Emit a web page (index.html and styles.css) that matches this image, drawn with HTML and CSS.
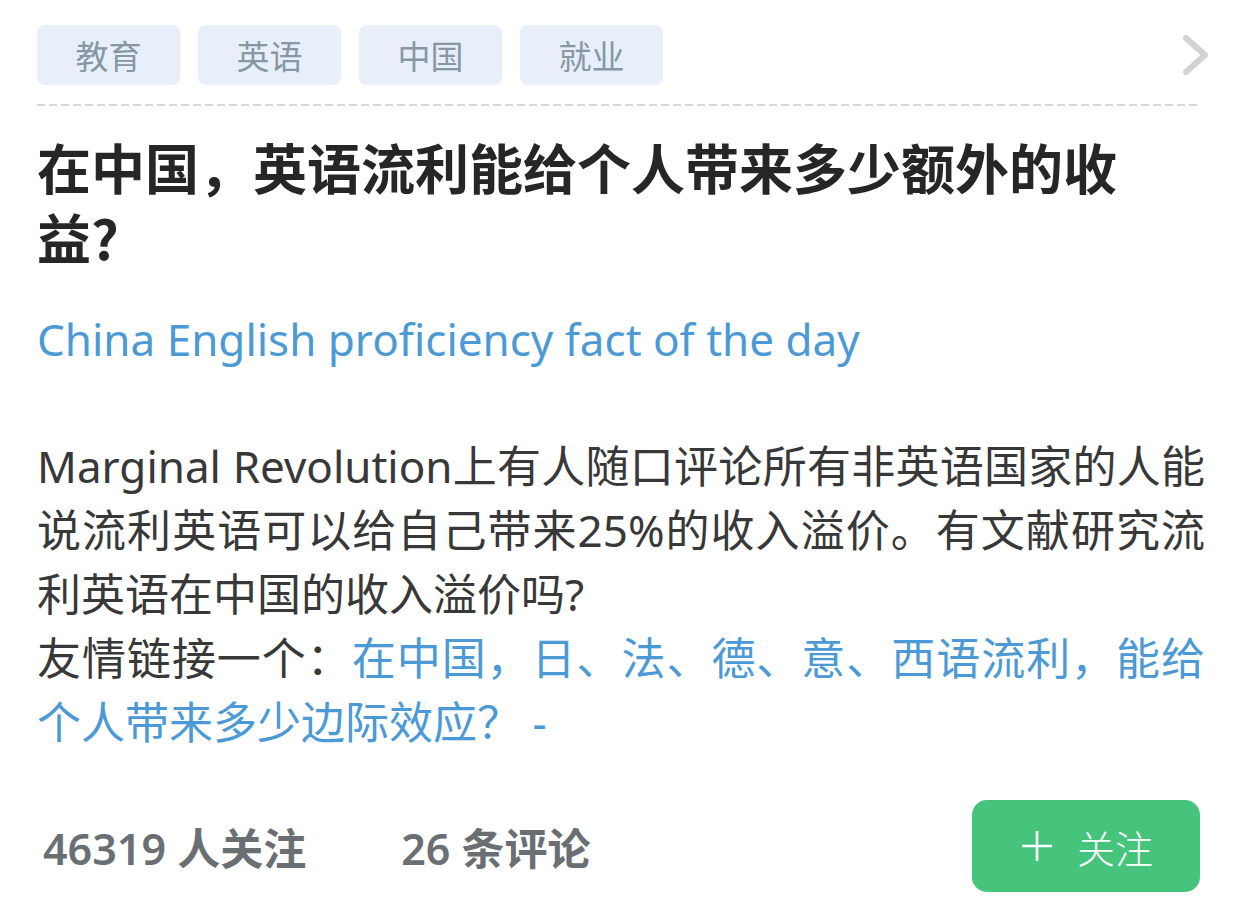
FILE: index.html
```html
<!DOCTYPE html>
<html lang="zh-CN">
<head>
<meta charset="utf-8">
<title>问题</title>
<link rel="stylesheet" href="styles.css">
</head>
<body>
<div class="card">
  <div class="tags-row">
    <div class="tags">
      <span class="tag">教育</span>
      <span class="tag">英语</span>
      <span class="tag">中国</span>
      <span class="tag">就业</span>
    </div>
    <svg class="chevron" width="30" height="42" viewBox="0 0 30 42">
      <polyline points="5,4 24,21 5,38" fill="none" stroke="#d3d3d3" stroke-width="6" stroke-linecap="round" stroke-linejoin="round"/>
    </svg>
  </div>
  <div class="dash"></div>

  <h1 class="title">在中国，英语流利能给个人带来多少额外的收益?</h1>

  <p class="source"><a class="link">China English proficiency fact of the day</a></p>

  <div class="body">
    <p class="para">Marginal Revolution上有人随口评论所有非英语国家的人能说流利英语可以给自己带来25%的收入溢价。有文献研究流利英语在中国的收入溢价吗?</p>
    <p class="para">友情链接一个：<a class="link">在中国，日、法、德、意、西语流利，能给个人带来多少边际效应？ -</a></p>
  </div>

  <div class="footer">
    <div class="stats">
      <span class="stat">46319 人关注</span>
      <span class="stat">26 条评论</span>
    </div>
    <button class="follow">
      <svg class="plus" width="32" height="32" viewBox="0 0 32 32">
        <path d="M16 1V31M1 16H31" stroke="#fff" stroke-width="2.6" fill="none"/>
      </svg>
      <span>关注</span>
    </button>
  </div>
</div>
</body>
</html>
```

FILE: styles.css
```css
* { box-sizing: border-box; }

html, body {
  margin: 0;
  padding: 0;
  background: #ffffff;
}

body {
  font-family: "Noto Sans", "Noto Sans CJK SC", sans-serif;
  color: #333333;
}

.card {
  width: 1242px;
  padding: 25px 37px 0 37px;
}

.tags-row {
  display: flex;
  align-items: center;
  justify-content: space-between;
  height: 60px;
}

.tags {
  display: flex;
  gap: 18px;
}

.tag {
  display: flex;
  align-items: center;
  justify-content: center;
  width: 143px;
  height: 60px;
  border-radius: 8px;
  background: #e8effa;
  color: #8797a6;
  font-family: "Noto Sans CJK SC", sans-serif;
  font-size: 33px;
  font-weight: 400;
}

.chevron {
  margin-right: -6px;
}

.dash {
  margin-top: 19px;
  height: 2px;
  width: 1163px;
  background: repeating-linear-gradient(90deg, #d6d6d6 0 8px, transparent 8px 12px);
}

.title {
  margin: 26px 0 0 0;
  max-width: 1120px;
  font-family: "Noto Sans CJK SC", sans-serif;
  font-size: 54px;
  line-height: 70px;
  font-weight: 700;
  color: #262626;
}

.source {
  margin: 35px 0 0 0;
  font-size: 44px;
  line-height: 64px;
}

.link {
  color: #4b9ad5;
  text-decoration: none;
}

.body {
  margin-top: 63px;
  font-size: 44px;
  line-height: 64px;
  color: #383838;
  text-align: justify;
}

.para {
  margin: 0;
}

.footer {
  margin-top: 46px;
  display: flex;
  align-items: center;
  justify-content: space-between;
}

.stats {
  display: flex;
  gap: 95px;
  padding-left: 6px;
}

.stat {
  font-size: 43px;
  font-weight: 600;
  color: #6a6f74;
}

.follow {
  display: flex;
  align-items: center;
  justify-content: center;
  gap: 24px;
  width: 228px;
  height: 92px;
  margin-right: 5px;
  border: none;
  border-radius: 15px;
  background: #46c47c;
  color: #ffffff;
  font-family: "Noto Sans CJK SC", sans-serif;
  font-size: 38px;
  font-weight: 300;
  padding: 0 0 0 2px;
}
```
